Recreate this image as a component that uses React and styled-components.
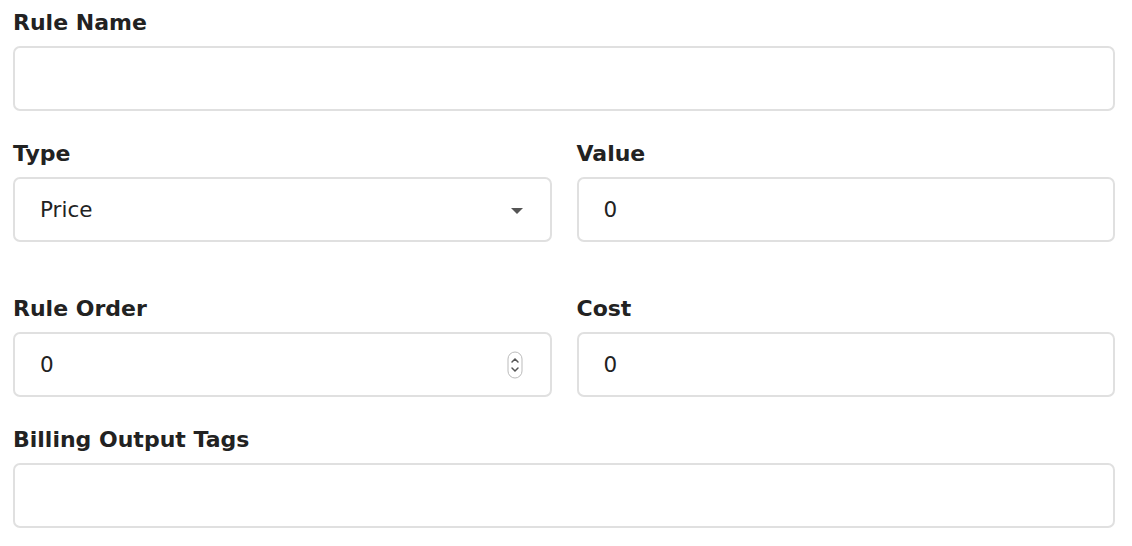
import React from 'react'
import styled, {createGlobalStyle} from 'styled-components'

const GlobalStyle = createGlobalStyle`
  body {
    margin: 0;
    background: #fff;
    font-family: "DejaVu Sans", "Liberation Sans", sans-serif;
    color: #222;
  }
`

const Form = styled.form`
  width: 1102px;
  padding: 8px 0 0 13px;
`

const Row = styled.div`
  display: grid;
  grid-template-columns: ${props => (props.$split ? '1fr 1fr' : '1fr')};
  column-gap: 25px;
  margin-bottom: ${props => props.$gap || 0}px;
`

const Field = styled.div`
  display: flex;
  flex-direction: column;
`

const Label = styled.label`
  font-size: 22px;
  font-weight: bold;
  line-height: 30px;
  color: #222;
  margin-bottom: 8px;
`

const Box = styled.div`
  position: relative;
  height: 65px;
  box-sizing: border-box;
  border: 2px solid #e0e0e0;
  border-radius: 7px;
  display: flex;
  align-items: center;
  padding: 0 25px;
  font-size: 21.5px;
  color: #222;
`

const Arrow = styled.span`
  position: absolute;
  right: 27px;
  top: 29px;
  width: 0;
  height: 0;
  border-left: 6px solid transparent;
  border-right: 6px solid transparent;
  border-top: 6px solid #555;
`

const Spinner = styled.svg`
  position: absolute;
  right: 27px;
  top: 17px;
`

const Select = ({value}) => (
  <Box>
    {value}
    <Arrow />
  </Box>
)

const NumberBox = ({value}) => (
  <Box>
    {value}
    <Spinner width="16" height="28" viewBox="0 0 16 28">
      <rect x="1" y="1" width="14" height="26" rx="7" fill="#fff" stroke="#bbb" strokeWidth="1" />
      <path d="M5 11 L8 8 L11 11" fill="none" stroke="#555" strokeWidth="1.5" strokeLinecap="round" />
      <path d="M5 17 L8 20 L11 17" fill="none" stroke="#555" strokeWidth="1.5" strokeLinecap="round" />
    </Spinner>
  </Box>
)

const App = () => (
  <>
    <GlobalStyle />
    <Form>
      <Row $gap={28}>
        <Field>
          <Label>Rule Name</Label>
          <Box />
        </Field>
      </Row>
      <Row $split $gap={52}>
        <Field>
          <Label>Type</Label>
          <Select value="Price" />
        </Field>
        <Field>
          <Label>Value</Label>
          <Box>0</Box>
        </Field>
      </Row>
      <Row $split $gap={28}>
        <Field>
          <Label>Rule Order</Label>
          <NumberBox value="0" />
        </Field>
        <Field>
          <Label>Cost</Label>
          <Box>0</Box>
        </Field>
      </Row>
      <Row>
        <Field>
          <Label>Billing Output Tags</Label>
          <Box />
        </Field>
      </Row>
    </Form>
  </>
)

export default App
